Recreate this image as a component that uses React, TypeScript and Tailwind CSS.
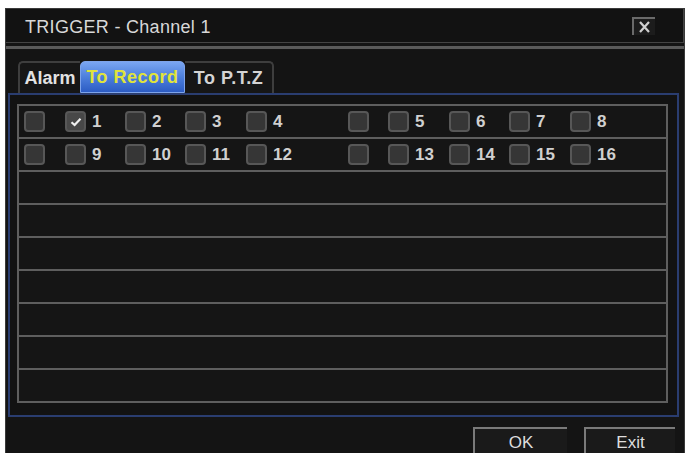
import React from "react";

const font = { fontFamily: '"Liberation Sans", Arial, sans-serif' };

type Cell = { w: number; label?: string; checked?: boolean };

const row1: Cell[] = [
  { w: 41 },
  { w: 60, label: "1", checked: true },
  { w: 60, label: "2" },
  { w: 61, label: "3" },
  { w: 102, label: "4" },
  { w: 40 },
  { w: 61, label: "5" },
  { w: 60, label: "6" },
  { w: 61, label: "7" },
  { w: 60, label: "8" },
];
const row2: Cell[] = [
  { w: 41 },
  { w: 60, label: "9" },
  { w: 60, label: "10" },
  { w: 61, label: "11" },
  { w: 102, label: "12" },
  { w: 40 },
  { w: 61, label: "13" },
  { w: 60, label: "14" },
  { w: 61, label: "15" },
  { w: 60, label: "16" },
];

function Box({ checked }: { checked?: boolean }) {
  return (
    <div
      className={
        "w-[21px] h-[21px] rounded-[4px] border-2 border-[#575757] flex items-center justify-center shrink-0 " +
        (checked ? "bg-[#484848]" : "bg-[#363636]")
      }
    >
      {checked && (
        <svg width="12" height="10" viewBox="0 0 12 10">
          <path d="M1.5 5.2 L4.6 8 L10.5 1.8" fill="none" stroke="#f0f0f0" strokeWidth="2.2" />
        </svg>
      )}
    </div>
  );
}

function CheckRow({ cells }: { cells: Cell[] }) {
  return (
    <div className="h-[33px] flex items-center pl-[5px] border-b-2 border-[#5e5e5e]">
      {cells.map((c, i) => (
        <div key={i} className="flex items-center gap-[6px] shrink-0" style={{ width: c.w }}>
          <Box checked={c.checked} />
          {c.label && (
            <span className="text-[17px] font-bold text-[#d0d0d0] leading-none">{c.label}</span>
          )}
        </div>
      ))}
    </div>
  );
}

export default function App() {
  return (
    <div className="w-[687px] h-[453px] bg-white pt-[8px] pl-[5px] overflow-hidden" style={font}>
      <div className="w-[680px] h-[450px] bg-[#141414] border border-[#3a3a3a] flex flex-col">
        {/* Title bar */}
        <div className="h-[34px] shrink-0 flex items-center justify-between pl-[19px] pr-[28px] border-b border-r border-[#444] bg-[#121212]">
          <span className="text-[18px] text-[#d8d8d8] tracking-[0.3px] leading-none pt-[3px]">
            TRIGGER - Channel 1
          </span>
          <div className="w-[23px] h-[18px] border-l-2 border-t-2 border-[#6a6a6a] bg-[#1c1c1c] flex items-center justify-center">
            <svg width="13" height="12" viewBox="0 0 13 12">
              <path d="M2 1 L11 11 M11 1 L2 11" stroke="#cfcfcf" strokeWidth="2.2" />
            </svg>
          </div>
        </div>
        <div className="h-[3px] shrink-0" />
        <div className="h-[3px] shrink-0 bg-[#5a5a5a]" />
        {/* Tabs */}
        <div className="mt-[12px] pl-[12px] flex h-[32px] shrink-0 items-stretch">
          <div className="w-[62px] flex items-center justify-center border-l-2 border-t-2 border-[#3e3e3e] rounded-tl-[5px] bg-[#161616]">
            <span className="text-[18px] font-bold text-[#e2e2e2] leading-none">Alarm</span>
          </div>
          <div className="w-[105px] flex items-center justify-center rounded-t-[5px] border border-[#7ea4ea] bg-gradient-to-b from-[#7aa6f2] via-[#4d7fdc] to-[#2c5cc4]">
            <span className="text-[18px] font-bold text-[#e0e43a] leading-none tracking-[0.5px]">To Record</span>
          </div>
          <div className="w-[89px] flex items-center justify-center border-r-2 border-t-2 border-[#3e3e3e] rounded-tr-[5px] bg-[#161616]">
            <span className="text-[18px] font-bold text-[#d4d4d4] leading-none tracking-[0.5px]">To P.T.Z</span>
          </div>
        </div>
        {/* Panel */}
        <div className="ml-[2px] w-[671px] h-[324px] shrink-0 border-2 border-[#2a3d70] bg-[#121212] pt-[9px] pl-[7px]">
          <div className="w-[651px] border-2 border-[#5e5e5e] bg-[#151515]">
            <CheckRow cells={row1} />
            <CheckRow cells={row2} />
            {Array.from({ length: 7 }).map((_, i) => (
              <div
                key={i}
                className={i < 6 ? "h-[33px] border-b-2 border-[#5e5e5e]" : "h-[31px]"}
              />
            ))}
          </div>
        </div>
        {/* Footer */}
        <div className="mt-[10px] flex justify-end gap-[17px] pr-[9px]">
          <button className="w-[94px] h-[30px] border-l-2 border-t-2 border-[#7a7a7a] bg-[#1a1a1a] text-[17px] text-[#dedede] flex items-center justify-center">
            OK
          </button>
          <button className="w-[91px] h-[30px] border-l-2 border-t-2 border-[#7a7a7a] bg-[#1a1a1a] text-[17px] text-[#dedede] flex items-center justify-center">
            Exit
          </button>
        </div>
      </div>
    </div>
  );
}
